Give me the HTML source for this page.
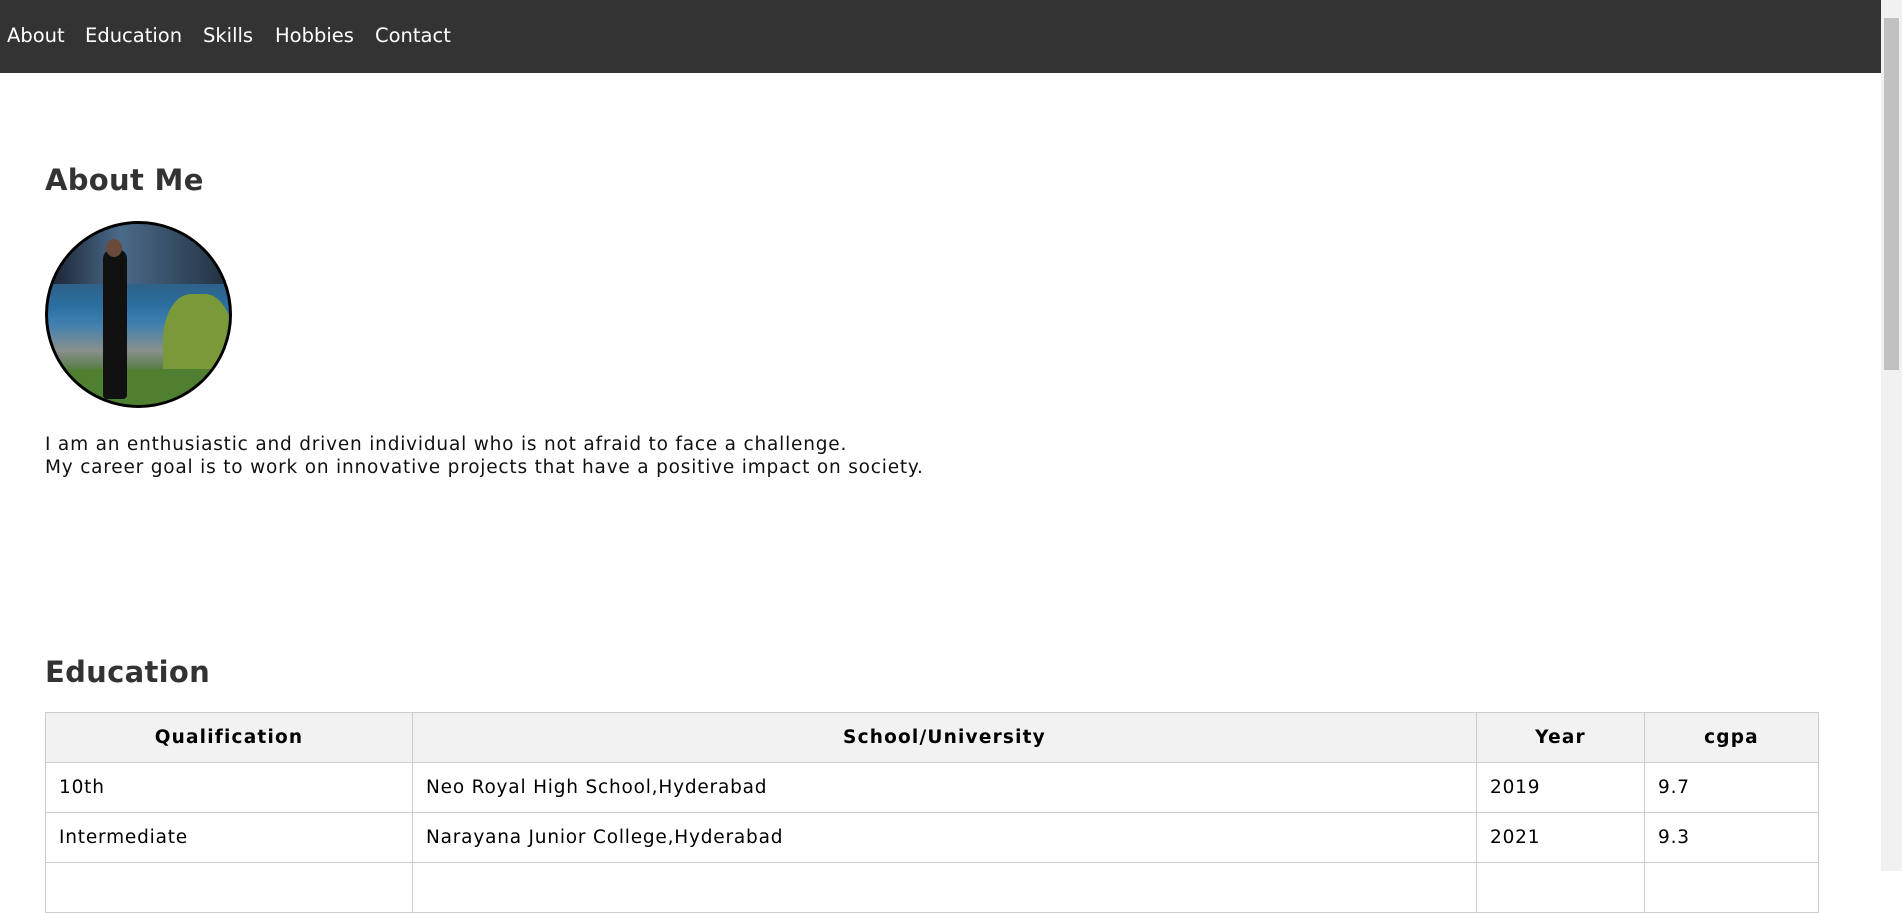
<!DOCTYPE html>
<html><head><meta charset="utf-8"><style>
html,body{margin:0;padding:0;width:1902px;height:871px;overflow:hidden;background:#fff;font-family:"DejaVu Sans",Verdana,sans-serif;}
nav{position:absolute;left:0;top:0;width:1881px;height:73px;background:#333;}
nav a{position:absolute;top:24px;color:#fff;font-size:19.5px;text-decoration:none;}
h2{position:absolute;left:45px;margin:0;font-size:29px;font-weight:bold;color:#333;letter-spacing:0.3px;}
.photo{position:absolute;left:45px;top:221px;width:181px;height:181px;border:3px solid #000;border-radius:50%;overflow:hidden;
background:linear-gradient(180deg,#1d2a3a 0%,#35516e 20%,#2a6fa0 45%,#3f7fb0 55%,#8a8f8c 70%,#4c7a3a 82%,#3f6f2a 100%);}
p{position:absolute;left:45px;top:433px;margin:0;font-size:18.5px;line-height:23px;color:#111;letter-spacing:0.8px;}
table{position:absolute;left:45px;top:712px;width:1774px;border-collapse:collapse;font-size:18.5px;color:#000;letter-spacing:0.8px;}
th,td{border:1px solid #ccc;height:49px;padding:0 13px;text-align:left;}
th{background:#f2f2f2;text-align:center;font-weight:bold;letter-spacing:1.2px;}
.sb{position:absolute;right:0;top:0;width:21px;height:871px;background:#f1f1f1;}
.sb div{position:absolute;left:3px;top:18px;width:15px;height:352px;background:#c1c1c1;}
</style></head><body>
<nav><a style="left:7px">About</a><a style="left:85px">Education</a><a style="left:203px">Skills</a><a style="left:275px">Hobbies</a><a style="left:375px">Contact</a></nav>
<h2 style="top:163px">About Me</h2>
<div class="photo">
<div style="position:absolute;left:0;top:0;width:181px;height:60px;background:linear-gradient(90deg,#1a2230,#4a6a8a 40%,#223040)"></div>
<div style="position:absolute;left:115px;top:70px;width:70px;height:115px;border-radius:40% 40% 0 0;background:#7a9a3a"></div>
<div style="position:absolute;left:0;top:145px;width:181px;height:40px;background:#4f7f30"></div>
<div style="position:absolute;left:55px;top:25px;width:24px;height:150px;background:#111;border-radius:10px 10px 4px 4px"></div>
<div style="position:absolute;left:58px;top:15px;width:16px;height:18px;background:#6a4a3a;border-radius:50%"></div>
</div>
<p>I am an enthusiastic and driven individual who is not afraid to face a challenge.<br>My career goal is to work on innovative projects that have a positive impact on society.</p>
<h2 style="top:655px">Education</h2>
<table>
<tr><th style="width:340px">Qualification</th><th>School/University</th><th style="width:141px">Year</th><th style="width:147px">cgpa</th></tr>
<tr><td>10th</td><td>Neo Royal High School,Hyderabad</td><td>2019</td><td>9.7</td></tr>
<tr><td>Intermediate</td><td>Narayana Junior College,Hyderabad</td><td>2021</td><td>9.3</td></tr>
<tr><td>&nbsp;</td><td></td><td></td><td></td></tr>
</table>
<div class="sb"><div></div></div>
</body></html>
